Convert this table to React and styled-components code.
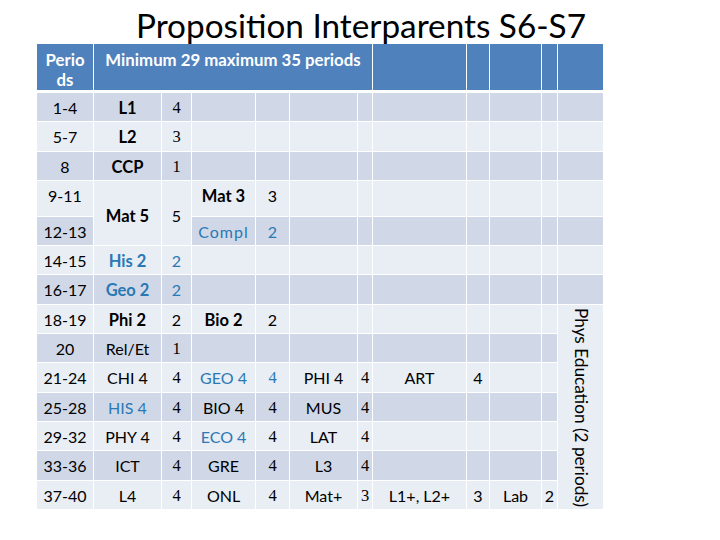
import React from "react";
import styled, { createGlobalStyle, css } from "styled-components";

const Global = createGlobalStyle`
  html, body { margin: 0; padding: 0; background: #ffffff; }
  body { font-family: Lato, "Open Sans", sans-serif; color: #000; }
`;

const Page = styled.div`
  width: 720px;
  height: 540px;
  display: flex;
  flex-direction: column;
  box-sizing: border-box;
`;

const Title = styled.h1`
  margin: 0;
  height: 44px;
  font-family: Lato, sans-serif;
  font-weight: 400;
  font-size: 33.3px;
  line-height: 50px;
  text-align: center;
  color: #000;
  white-space: nowrap;
  padding-left: 2px;
`;

const Grid = styled.div`
  margin-left: 37px;
  width: 566px;
  display: grid;
  grid-template-columns: 56px 67px 29px 63px 33px 67px 14px 93px 22px 51px 15px 45px;
  grid-template-rows: 48px repeat(3, 28.3px) 35px repeat(10, 28.3px);
  gap: 1px;
  background: #ffffff;
`;

const HeadCell = styled.div`
  background: #4f81bd;
  color: #ffffff;
  font-weight: 700;
  font-size: 16.8px;
  line-height: 20px;
  padding-top: 6px;
  margin-bottom: 2px;
  text-align: center;
  white-space: nowrap;
  grid-column: span ${(p) => p.$span || 1};
`;

const Cell = styled.div`
  background: ${(p) => (p.$tone === "dark" ? "#d0d8e8" : "#e9edf4")};
  color: ${(p) => (p.$blue ? "#2a78b4" : "#000000")};
  font-weight: ${(p) => (p.$bold ? 700 : 400)};
  font-family: ${(p) =>
    p.$serif ? '"Liberation Serif", serif' : 'Lato, "Open Sans", sans-serif'};
  font-size: ${(p) => (p.$serif ? "16.5px" : p.$bold ? "16.5px" : "16px")};
  letter-spacing: ${(p) => (p.$wide ? "1px" : "normal")};
  line-height: 20px;
  text-align: center;
  white-space: nowrap;
  display: flex;
  justify-content: center;
  align-items: ${(p) => (p.$middle ? "center" : "flex-start")};
  padding-top: ${(p) => (p.$middle ? "6px" : "5px")};
  box-sizing: border-box;
  grid-row: span ${(p) => p.$rows || 1};
  ${(p) =>
    p.$vertical &&
    css`
      writing-mode: vertical-rl;
      align-items: center;
      justify-content: center;
      padding-top: 2px;
      font-size: 17.2px;
    `}
`;

const B = "dark";
const L = "light";

const e = (n) => Array.from({ length: n }, () => ({ t: "" }));

const rows = [
  { tone: B, cells: [{ t: "1-4" }, { t: "L1", bold: 1 }, { t: "4", serif: 1 }, ...e(9)] },
  { tone: L, cells: [{ t: "5-7" }, { t: "L2", bold: 1 }, { t: "3", serif: 1 }, ...e(9)] },
  { tone: B, cells: [{ t: "8" }, { t: "CCP", bold: 1 }, { t: "1", serif: 1 }, ...e(9)] },
  {
    tone: L,
    cells: [
      { t: "9-11" },
      { t: "Mat 5", bold: 1, rows: 2, middle: 1 },
      { t: "5", rows: 2, middle: 1 },
      { t: "Mat 3", bold: 1 },
      { t: "3" },
      ...e(7),
    ],
  },
  { tone: B, cells: [{ t: "12-13" }, { t: "Compl", blue: 1, wide: 1 }, { t: "2", blue: 1 }, ...e(7)] },
  { tone: L, cells: [{ t: "14-15" }, { t: "His 2", bold: 1, blue: 1 }, { t: "2", blue: 1 }, ...e(9)] },
  { tone: B, cells: [{ t: "16-17" }, { t: "Geo 2", bold: 1, blue: 1 }, { t: "2", blue: 1 }, ...e(9)] },
  {
    tone: L,
    cells: [
      { t: "18-19" },
      { t: "Phi 2", bold: 1 },
      { t: "2" },
      { t: "Bio 2", bold: 1 },
      { t: "2" },
      ...e(6),
      { t: "Phys Education (2 periods)", rows: 7, vertical: 1, tone: L },
    ],
  },
  { tone: B, cells: [{ t: "20" }, { t: "Rel/Et" }, { t: "1", serif: 1 }, ...e(8)] },
  {
    tone: L,
    cells: [
      { t: "21-24" },
      { t: "CHI 4" },
      { t: "4", serif: 1 },
      { t: "GEO 4", blue: 1 },
      { t: "4", blue: 1, serif: 1 },
      { t: "PHI 4" },
      { t: "4", serif: 1 },
      { t: "ART" },
      { t: "4" },
      ...e(2),
    ],
  },
  {
    tone: B,
    cells: [
      { t: "25-28" },
      { t: "HIS 4", blue: 1 },
      { t: "4", serif: 1 },
      { t: "BIO 4" },
      { t: "4", serif: 1 },
      { t: "MUS" },
      { t: "4", serif: 1 },
      ...e(4),
    ],
  },
  {
    tone: L,
    cells: [
      { t: "29-32" },
      { t: "PHY 4" },
      { t: "4", serif: 1 },
      { t: "ECO 4", blue: 1 },
      { t: "4", serif: 1 },
      { t: "LAT" },
      { t: "4", serif: 1 },
      ...e(4),
    ],
  },
  {
    tone: B,
    cells: [
      { t: "33-36" },
      { t: "ICT" },
      { t: "4", serif: 1 },
      { t: "GRE" },
      { t: "4", serif: 1 },
      { t: "L3" },
      { t: "4", serif: 1 },
      ...e(4),
    ],
  },
  {
    tone: L,
    cells: [
      { t: "37-40" },
      { t: "L4" },
      { t: "4", serif: 1 },
      { t: "ONL" },
      { t: "4", serif: 1 },
      { t: "Mat+" },
      { t: "3", serif: 1 },
      { t: "L1+, L2+" },
      { t: "3" },
      { t: "Lab" },
      { t: "2" },
    ],
  },
];

export default function App() {
  return (
    <>
      <Global />
      <Page>
        <Title>Proposition Interparents S6-S7</Title>
        <Grid>
          <HeadCell>
            Perio
            <br />
            ds
          </HeadCell>
          <HeadCell $span={6}>Minimum 29 maximum 35 periods</HeadCell>
          <HeadCell />
          <HeadCell />
          <HeadCell />
          <HeadCell />
          <HeadCell />
          {rows.map((row, ri) =>
            row.cells.map((c, ci) => (
              <Cell
                key={`${ri}-${ci}`}
                $tone={c.tone || (c.rows === 2 ? L : row.tone)}
                $bold={c.bold}
                $blue={c.blue}
                $serif={c.serif}
                $wide={c.wide}
                $rows={c.rows}
                $middle={c.middle}
                $vertical={c.vertical}
              >
                {c.t}
              </Cell>
            ))
          )}
        </Grid>
      </Page>
    </>
  );
}
